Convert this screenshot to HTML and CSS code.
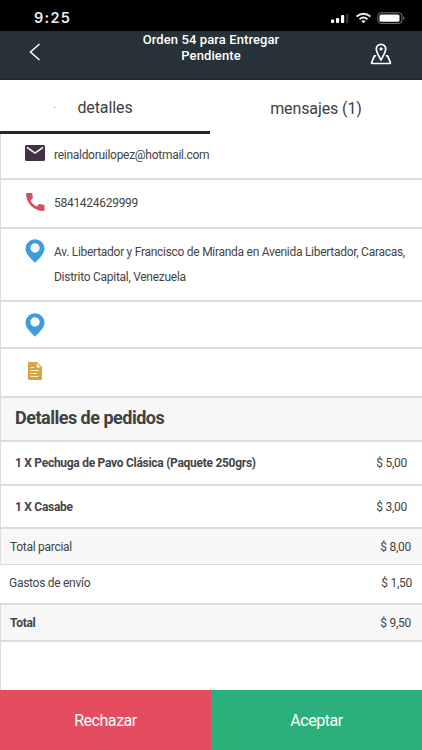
FILE: index.html
```html
<!DOCTYPE html>
<html lang="es">
<head>
<meta charset="utf-8">
<title>Orden 54</title>
<link rel="stylesheet" href="styles.css">
</head>
<body>
<div class="phone">
  <div class="status">
    <span class="clock">9:25</span>
    <svg class="status-icons" viewBox="0 0 80 16" width="80" height="16">
      <g fill="#fff"><rect x="1" y="9.500" width="3.200" height="3.500" rx="1"/><rect x="6" y="8" width="3.200" height="5" rx="1"/><rect x="11" y="5" width="3.200" height="8" rx="1"/></g>
      <rect x="16" y="3.500" width="2.500" height="9.500" rx="1" fill="#333"/>
      <g fill="none" stroke="#eee" stroke-width="1.800"><path d="M26.500 6.500q7-5.500 14 0"/><path d="M29.500 9.200q4-3.400 8 0"/></g>
      <path d="M31.300 11q2.200-1.700 4.400 0l-2.200 2.300z" fill="#fff"/>
      <rect x="47.900" y="2.800" width="24" height="10.600" rx="3" fill="none" stroke="#777" stroke-width="1"/>
      <rect x="49.500" y="4.400" width="20" height="7.400" rx="1.500" fill="#fff"/>
      <path d="M73.600 6.700q1.500 1.500 0 3z" fill="#777" stroke="#777" stroke-width=".6"/>
    </svg>
  </div>
  <header class="header">
    <svg class="back" viewBox="0 0 12 18" width="12" height="18"><path d="M10.500 1L1.500 9l9 8" fill="none" stroke="#fff" stroke-width="1.500"/></svg>
    <h1 class="title">Orden 54 para Entregar<br>Pendiente</h1>
    <svg class="map" viewBox="0 0 22 22" width="22" height="22" fill="none" stroke="#fff" stroke-width="1.700" stroke-linejoin="round" stroke-linecap="round"><path d="M11 17C9 13 6.300 9.500 6.300 6a4.700 4.700 0 0 1 9.400 0c0 3.500-2.700 7-4.700 11z"/><circle cx="11" cy="6" r="1.200" fill="#fff" stroke-width="1"/><path d="M5.500 12.800H4.400L1.700 19.300q-.5 1.200.9 1.200H19.400q1.400 0 .9-1.200L17.600 12.800H16.500"/></svg>
  </header>
  <nav class="tabs">
    <div class="tab active"><span class="dot"></span><span>detalles</span></div>
    <div class="tab second"><span>mensajes (1)</span></div>
  </nav>
  <main class="list">
    <div class="row email">
      <svg class="icon" viewBox="0 0 20 16" width="20" height="16"><rect width="20" height="16" rx="1.500" fill="#45304a"/><path d="M2 2.400L10 8l8-5.600" fill="none" stroke="#fff" stroke-width="1.500"/></svg>
      <span class="email-text">reinaldoruilopez@hotmail.com</span>
    </div>
    <div class="row phone-row">
      <svg class="icon" viewBox="2 2 20 20" width="20" height="20"><path fill="#d45060" d="M7.400 10.200c1.400 2.800 3.500 4.900 6.300 6.300l2.200-2.200c.4-.3.800-.4 1.200-.2 1.100.4 2.300.6 3.500.6.600 0 .9.400.9 1V20.100c0 .5-.4.900-1 .9C11 21 3 13 3 4c0-.6.400-1 1-1h4.400c.6 0 1 .4 1 1 0 1.200.200 2.400.5 3.500.1.400 0 .800-.3 1.100z"/></svg>
      <span class="phone-text">5841424629999</span>
    </div>
    <div class="row address">
      <svg class="icon" viewBox="0 0 20 24" width="20" height="24"><path fill="#3d9cda" fill-rule="evenodd" d="M10 .3A9.500 9.300 0 0 0 .5 9.600C.5 15 5.800 19.500 10 23.800c4.200-4.300 9.500-8.800 9.500-14.200A9.500 9.300 0 0 0 10 .3zM10 4.300a4.700 4.700 0 1 1 0 9.400 4.700 4.700 0 0 1 0-9.400z"/></svg>
      <p class="address-text">Av. Libertador y Francisco de Miranda en Avenida Libertador, Caracas,<br>Distrito Capital, Venezuela</p>
    </div>
    <div class="row pin">
      <svg class="icon" viewBox="0 0 20 24" width="20" height="24"><path fill="#3d9cda" fill-rule="evenodd" d="M10 .3A9.500 9.300 0 0 0 .5 9.600C.5 15 5.800 19.500 10 23.800c4.200-4.300 9.500-8.800 9.500-14.200A9.500 9.300 0 0 0 10 .3zM10 4.300a4.700 4.700 0 1 1 0 9.400 4.700 4.700 0 0 1 0-9.400z"/></svg>
    </div>
    <div class="row note">
      <svg class="icon" viewBox="0 0 20 18" width="20" height="18"><path fill="#d9a441" d="M4 0h8L17 5v12q0 1-1 1H4q-1 0-1-1V1q0-1 1-1z"/><path d="M11.500 1.300v4.200h4.300z" fill="#fff3d8"/><path d="M5.500 5.500H9M5.500 8.500h8.500M5.500 11.500h6.500M5.500 14.500h7.500" stroke="#fff3d8" stroke-width="1"/></svg>
    </div>
    <h2 class="row section"><span>Detalles de pedidos</span></h2>
    <div class="row item first"><b>1 X Pechuga de Pavo Clásica (Paquete 250grs)</b><span class="price">$ 5,00</span></div>
    <div class="row item"><b>1 X Casabe</b><span class="price">$ 3,00</span></div>
    <div class="row sum subtotal"><span>Total parcial</span><span class="price">$ 8,00</span></div>
    <div class="row sum shipping"><span>Gastos de envío</span><span class="price">$ 1,50</span></div>
    <div class="row sum total"><b>Total</b><span class="price">$ 9,50</span></div>
    <div class="row blank"></div>
  </main>
  <footer class="actions">
    <button class="reject">Rechazar</button>
    <button class="accept">Aceptar</button>
  </footer>
</div>
</body>
</html>
```
FILE: styles.css
```css
* { box-sizing: border-box; }
body { margin: 0; font-family: Roboto, sans-serif; font-size: 12px; color: #444; background: #fff; }
.phone { width: 422px; height: 750px; display: flex; flex-direction: column; overflow: hidden; }
.status { height: 31px; flex: none; background: #000; display: flex; justify-content: space-between; align-items: flex-start; padding: 10px 12px 0 34px; }
.clock { color: #eee; font: 600 14.500px/16px Inter, sans-serif; letter-spacing: 1.3px; }
.status-icons { display: block; }
.header { height: 49px; flex: none; background: #273238; display: flex; justify-content: space-between; align-items: flex-start; padding: 0 30px 0 29px; border-bottom: 1px solid #1f292e; }
.back { margin-top: 12px; }
.title { margin: 1px 0 0; color: #fff; font-size: 13px; line-height: 15.500px; font-weight: 500; text-align: center; letter-spacing: .1px; padding-left: 11px; }
.map { margin-top: 12px; }
.tabs { height: 54px; flex: none; display: flex; font-size: 16px; letter-spacing: -.1px; color: #3b3e42; }
.tab { flex: 1; display: flex; align-items: center; justify-content: center; }
.tab.active { flex: 0 0 210px; border-bottom: 3px solid #20292e; padding-top: 3px; }
.tab.second { padding-top: 2px; }
.dot { width: 1px; height: 1px; background: #888; margin-right: 22px; margin-left: -23px; }
.list { flex: 1; display: flex; flex-direction: column; letter-spacing: -.28px; }
.row { flex: none; display: flex; border-left: 1px solid #dcdcdc; border-bottom: 2px solid #dcdcdc; margin: 0; }
.icon { flex: none; margin-left: 24px; margin-right: 9px; display: block; }
.email { height: 46px; padding-top: 11px; }
.email-text { line-height: 20px; }
.phone-row { height: 49px; padding-top: 12px; }
.phone-text { line-height: 22px; }
.address { height: 73px; padding-top: 10px; }
.address-text { margin: 1px 0 0; line-height: 25px; }
.pin { height: 47px; padding-top: 11px; }
.note { height: 49px; padding-top: 13px; }
.section { height: 44px; align-items: center; background: #f7f7f7; padding: 0 0 3px 14px; font-size: 18px; letter-spacing: -.5px; font-weight: 700; color: #404040; }
.item { height: 43px; align-items: center; justify-content: space-between; padding: 0 15px 0 14px; }
.item.first { height: 44px; padding-bottom: 1px; }
.sum { align-items: center; justify-content: space-between; padding: 0 11px 0 9px; }
.subtotal { height: 36px; background: #f7f7f7; border-bottom-width: 1px; }
.shipping { height: 40px; padding: 0 10px 3px 9px; border-left: 0; }
.total { height: 37px; background: #f7f7f7; }
.blank { flex: 1; border-bottom: 0; }
.actions { height: 60px; flex: none; display: flex; }
.actions button { flex: 1; border: 0; padding: 0; color: #fff; font: 400 16px Roboto, sans-serif; letter-spacing: -.45px; }
.actions .reject { background: #e44d60; }
.actions .accept { background: #2bb07c; }
```
